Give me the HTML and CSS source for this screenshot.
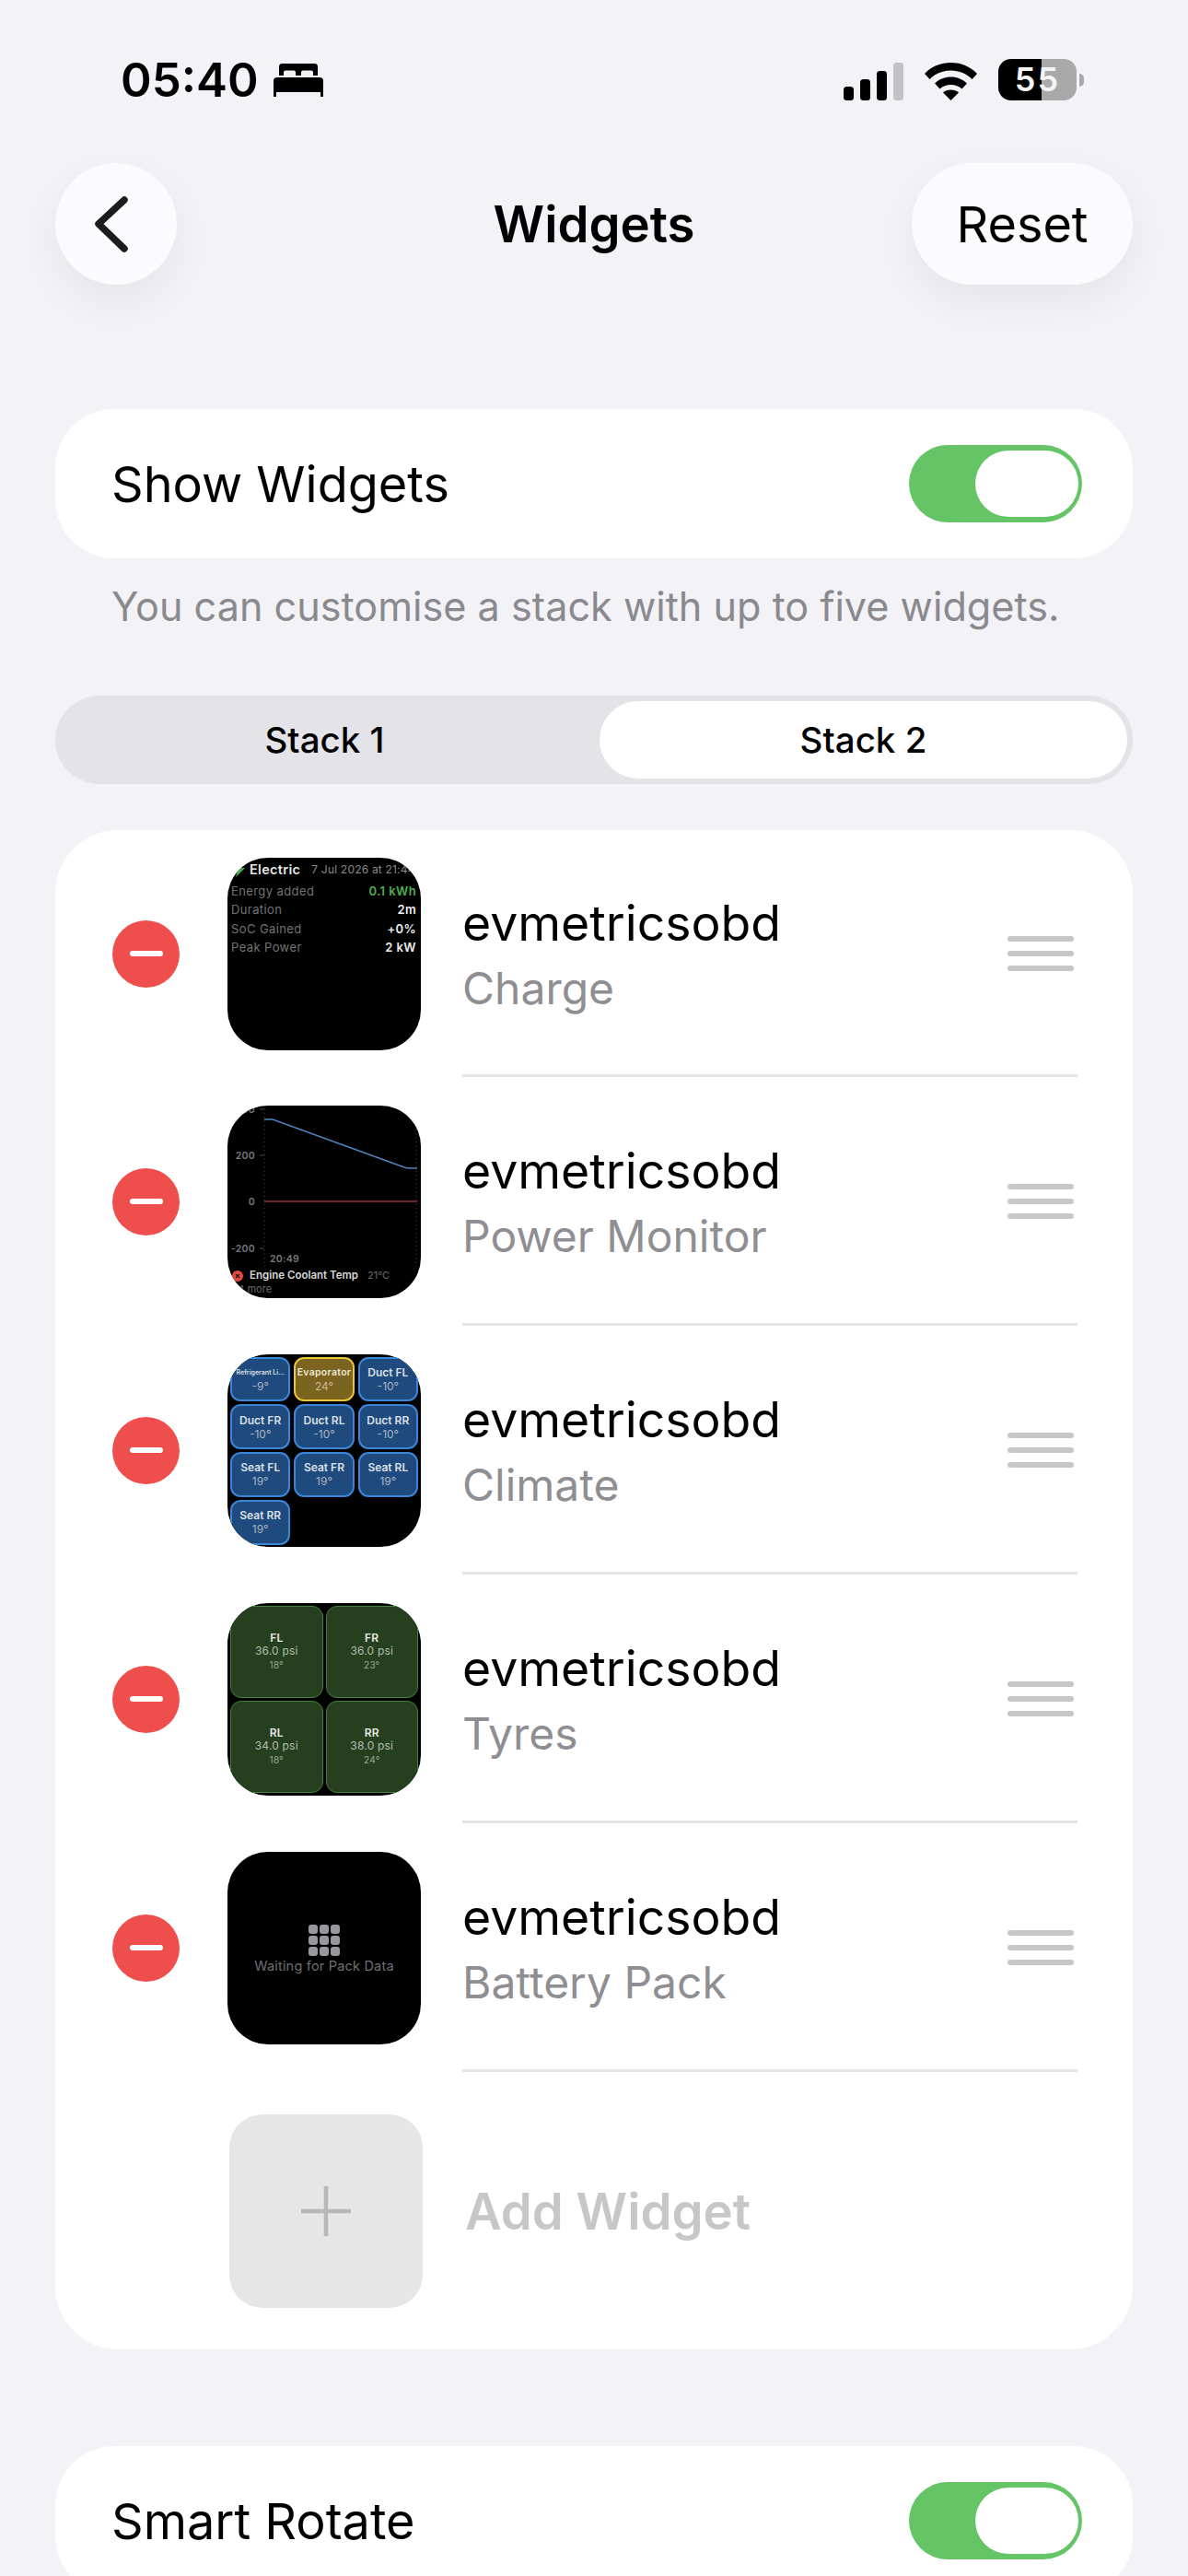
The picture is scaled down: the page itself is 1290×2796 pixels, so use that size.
FILE: index.html
```html
<!DOCTYPE html>
<html lang="en">
<head>
<meta charset="UTF-8">
<meta name="viewport" content="width=device-width, initial-scale=1.0">
<title>Widgets</title>
<link rel="stylesheet" href="styles.css">
</head>
<body>

<div class="status-bar">
    <div class="status-left">
        <span class="status-time">05:40</span>
        <svg class="bed-icon" width="54" height="36" viewBox="0 0 54 36">
            <path d="M6 3.5A3.5 3.5 0 0 1 9.500 0h35A3.500 3.500 0 0 1 48 3.500V13h-5V9.500a2 2 0 0 0-2-2h-9a2 2 0 0 0-2 2V13h-6V9.500a2 2 0 0 0-2-2h-9a2 2 0 0 0-2 2V13H6z" fill="#000"/>
            <path d="M4 15h46a4 4 0 0 1 4 4v17h-3v-5H3v5H0V19a4 4 0 0 1 4-4z" fill="#000"/>
        </svg>
    </div>
    <div class="status-right">
        <svg class="signal-icon" width="65" height="41" viewBox="0 0 65 41">
            <rect x="0" y="26" width="11" height="15" rx="3.500" fill="#000"/>
            <rect x="18" y="18" width="11" height="23" rx="3.500" fill="#000"/>
            <rect x="36" y="9" width="11" height="32" rx="3.500" fill="#000"/>
            <rect x="54" y="0" width="11" height="41" rx="3.500" fill="#c1c1c6"/>
        </svg>
        <svg class="wifi-icon" width="57" height="41" viewBox="0 0 57 41">
            <path d="M28.500 0C40 0 50 4.500 57 12l-5.500 6C45.500 12 37.500 8.500 28.500 8.500S11.500 12 5.500 18L0 12C7 4.500 17 0 28.500 0z" fill="#000"/>
            <path d="M28.500 15.500c7 0 13 2.700 17.500 7L40.500 28.500c-3-2.800-7.300-4.500-12-4.500s-9 1.700-12 4.500L11 22.500c4.500-4.300 10.500-7 17.500-7z" fill="#000"/>
            <path d="M28.500 29.500c3.500 0 6.500 1.200 8.500 3L28.500 41 20 32.500c2-1.800 5-3 8.500-3z" fill="#000"/>
        </svg>
        <div class="battery">
            <span class="battery-level">55</span>
        </div>
        <span class="battery-nub"></span>
    </div>
</div>

<div class="page">
    <div class="nav-bar">
        <button class="back-button">
            <svg width="132" height="132" viewBox="0 0 132 132">
                <path d="M75 40 47 66l28 27" fill="none" stroke="#1c1c1e" stroke-width="7.500" stroke-linecap="round" stroke-linejoin="round"/>
            </svg>
        </button>
        <h1 class="nav-title">Widgets</h1>
        <button class="reset-button">Reset</button>
    </div>

    <div class="toggle-card">
        <span class="toggle-label">Show Widgets</span>
        <span class="toggle"><span class="toggle-knob"></span></span>
    </div>
    <p class="hint">You can customise a stack with up to five widgets.</p>

    <div class="segments">
        <div class="segment segment-idle">Stack 1</div>
        <div class="segment segment-active"><span>Stack 2</span></div>
    </div>

    <div class="widget-list">
        <div class="widget-row">
            <span class="remove-button"><span class="remove-bar"></span></span>
            <div class="thumb">
                <div class="charge-head">
                    <svg class="charge-bolt" width="13" height="16" viewBox="0 0 13 16"><path d="M9 0 0 9h5l-2 7 10-10H7.500z" fill="#4caf50"/></svg>
                    <span class="charge-title">Electric</span>
                    <span class="charge-date">7 Jul 2026 at 21:44</span>
                </div>
                <div class="charge-line"><span>Energy added</span><b class="charge-green">0.1 kWh</b></div>
                <div class="charge-line"><span>Duration</span><b>2m</b></div>
                <div class="charge-line"><span>SoC Gained</span><b>+0%</b></div>
                <div class="charge-line"><span>Peak Power</span><b>2 kW</b></div>
            </div>
            <div class="row-body">
                <div class="row-text">
                    <div class="row-name">evmetricsobd</div>
                    <div class="row-sub">Charge</div>
                </div>
                <div class="handle"><span></span><span></span><span></span></div>
            </div>
        </div>

        <div class="widget-row">
            <span class="remove-button"><span class="remove-bar"></span></span>
            <div class="thumb">
                <svg class="chart" width="210" height="210" viewBox="0 0 210 210">
                    <path d="M40 3V175M205 3V175" stroke="#3a3a3c" stroke-width="1" stroke-dasharray="1.500 3" fill="none"/>
                    <path d="M35 4h5M35 54h5M35 155h5" stroke="#48484a" stroke-width="1" fill="none"/>
                    <path d="M40 15H49L192 67Q195 68 198 68H206" stroke="#4f86bf" stroke-width="1.500" fill="none"/>
                    <path d="M40 104H206" stroke="#e5493f" stroke-width="1" fill="none"/>
                    <text class="chart-axis" x="30" y="8" text-anchor="end">400</text>
                    <text class="chart-axis" x="30" y="58" text-anchor="end">200</text>
                    <text class="chart-axis" x="30" y="108" text-anchor="end">0</text>
                    <text class="chart-axis" x="30" y="159" text-anchor="end">-200</text>
                    <text class="chart-axis" x="46" y="170">20:49</text>
                    <circle cx="11" cy="185" r="6" fill="#e5493f"/>
                    <path d="M9 183l4 4M13 183l-4 4" stroke="#1c1c1e" stroke-width="1.300" fill="none"/>
                    <text class="chart-legend" x="24" y="188">Engine Coolant Temp</text>
                    <text class="chart-value" x="152" y="188">21°C</text>
                    <text class="chart-value" x="4" y="203">+4 more</text>
                </svg>
            </div>
            <div class="row-body">
                <div class="row-text">
                    <div class="row-name">evmetricsobd</div>
                    <div class="row-sub">Power Monitor</div>
                </div>
                <div class="handle"><span></span><span></span><span></span></div>
            </div>
        </div>

        <div class="widget-row">
            <span class="remove-button"><span class="remove-bar"></span></span>
            <div class="thumb climate-grid">
                <div class="climate-cell"><b class="climate-small">Refrigerant Li...</b><span>-9°</span></div>
                <div class="climate-cell climate-warm"><b>Evaporator</b><span>24°</span></div>
                <div class="climate-cell"><b>Duct FL</b><span>-10°</span></div>
                <div class="climate-cell"><b>Duct FR</b><span>-10°</span></div>
                <div class="climate-cell"><b>Duct RL</b><span>-10°</span></div>
                <div class="climate-cell"><b>Duct RR</b><span>-10°</span></div>
                <div class="climate-cell"><b>Seat FL</b><span>19°</span></div>
                <div class="climate-cell"><b>Seat FR</b><span>19°</span></div>
                <div class="climate-cell"><b>Seat RL</b><span>19°</span></div>
                <div class="climate-cell"><b>Seat RR</b><span>19°</span></div>
            </div>
            <div class="row-body">
                <div class="row-text">
                    <div class="row-name">evmetricsobd</div>
                    <div class="row-sub">Climate</div>
                </div>
                <div class="handle"><span></span><span></span><span></span></div>
            </div>
        </div>

        <div class="widget-row">
            <span class="remove-button"><span class="remove-bar"></span></span>
            <div class="thumb tyre-grid">
                <div class="tyre-cell"><b>FL</b><span>36.0 psi</span><small>18°</small></div>
                <div class="tyre-cell"><b>FR</b><span>36.0 psi</span><small>23°</small></div>
                <div class="tyre-cell"><b>RL</b><span>34.0 psi</span><small>18°</small></div>
                <div class="tyre-cell"><b>RR</b><span>38.0 psi</span><small>24°</small></div>
            </div>
            <div class="row-body">
                <div class="row-text">
                    <div class="row-name">evmetricsobd</div>
                    <div class="row-sub">Tyres</div>
                </div>
                <div class="handle"><span></span><span></span><span></span></div>
            </div>
        </div>

        <div class="widget-row">
            <span class="remove-button"><span class="remove-bar"></span></span>
            <div class="thumb pack-thumb">
                <div class="pack-icon">
                    <span></span><span></span><span></span>
                    <span></span><span></span><span></span>
                    <span></span><span></span><span></span>
                </div>
                <div class="pack-text">Waiting for Pack Data</div>
            </div>
            <div class="row-body">
                <div class="row-text">
                    <div class="row-name">evmetricsobd</div>
                    <div class="row-sub">Battery Pack</div>
                </div>
                <div class="handle"><span></span><span></span><span></span></div>
            </div>
        </div>

        <div class="add-row">
            <div class="add-tile">
                <svg width="54" height="54" viewBox="0 0 54 54">
                    <path d="M27 1V53M1 27H53" stroke="#b7b7b7" stroke-width="4.500" stroke-linecap="round" fill="none"/>
                </svg>
            </div>
            <span class="add-label">Add Widget</span>
        </div>
    </div>

    <div class="toggle-card rotate-card">
        <span class="toggle-label">Smart Rotate</span>
        <span class="toggle"><span class="toggle-knob"></span></span>
    </div>
</div>

</body>
</html>
```

FILE: styles.css
```css
html, body {
    height: 2796px;
    overflow: hidden;
}
body {
    margin: 0;
    padding: 0;
    background-color: #f2f2f7;
    color: #000;
    font-family: Inter, "Liberation Sans", sans-serif;
}

/* status bar */
.status-bar {
    height: 177px;
    box-sizing: border-box;
    padding: 64px 113px 0 131px;
    display: flex;
    justify-content: space-between;
    align-items: flex-start;
}
.status-left {
    display: flex;
    align-items: center;
    height: 46px;
}
.status-time {
    font-size: 51px;
    font-weight: 600;
    line-height: 46px;
}
.bed-icon {
    margin-left: 16px;
}
.status-right {
    display: flex;
    align-items: center;
    height: 45px;
}
.signal-icon {
    margin-top: 4px;
}
.wifi-icon {
    margin-left: 23px;
    margin-top: 4px;
}
.battery {
    margin-left: 23px;
    width: 85px;
    height: 45px;
    border-radius: 14px;
    background: linear-gradient(to right, #000 47px, #a9a9a9 47px);
    text-align: center;
}
.battery-level {
    color: #f4f4f4;
    font-size: 36px;
    font-weight: 600;
    line-height: 45px;
    letter-spacing: 2px;
    display: block;
}
.battery-nub {
    margin-left: 3px;
    width: 5px;
    height: 14px;
    border-radius: 0 7px 7px 0;
    background-color: #a9a9a9;
}

.page {
    padding: 0 60px;
}

/* nav */
.nav-bar {
    display: grid;
    grid-template-columns: 1fr auto 1fr;
    align-items: center;
    height: 132px;
}
.back-button {
    justify-self: start;
    width: 132px;
    height: 132px;
    padding: 0;
    border: none;
    border-radius: 50%;
    background-color: #fbfbfe;
    box-shadow: 0 18px 48px rgba(0, 0, 0, 0.06);
}
.back-button svg {
    display: block;
}
.nav-title {
    margin: 0;
    font-size: 54.500px;
    font-weight: 600;
}
.reset-button {
    justify-self: end;
    width: 240px;
    height: 132px;
    padding: 0;
    border: none;
    border-radius: 66px;
    background-color: #fbfbfe;
    box-shadow: 0 18px 48px rgba(0, 0, 0, 0.06);
    color: #000;
    font-family: inherit;
    font-size: 54px;
}

/* toggle cards */
.toggle-card {
    margin-top: 135px;
    height: 162px;
    box-sizing: border-box;
    padding: 0 55px 0 61px;
    display: flex;
    justify-content: space-between;
    align-items: center;
    background-color: #fff;
    border-radius: 64px;
}
.toggle-label {
    font-size: 54px;
}
.toggle {
    width: 188px;
    height: 84px;
    box-sizing: border-box;
    padding: 0 4px;
    display: flex;
    justify-content: flex-end;
    align-items: center;
    background-color: #65c466;
    border-radius: 42px;
}
.toggle-knob {
    width: 112px;
    height: 72px;
    background-color: #fff;
    border-radius: 36px;
}
.rotate-card {
    margin-top: 105px;
}

.hint {
    margin: 25px 0 0 0;
    padding-left: 61px;
    font-size: 43.200px;
    line-height: 54px;
    color: #8a8a8e;
}

/* segments */
.segments {
    margin-top: 70px;
    height: 96px;
    display: flex;
    background-color: #e3e3e8;
    border-radius: 48px;
}
.segment {
    width: 591px;
    text-align: center;
    font-size: 38.500px;
    font-weight: 500;
    line-height: 96px;
}
.segment-idle {
    box-sizing: border-box;
    padding-right: 6px;
}
.segment-active {
    flex: 1;
    padding: 6px 6px 6px 0;
}
.segment-active span {
    display: block;
    height: 84px;
    line-height: 84px;
    background-color: #fff;
    border-radius: 42px;
}

/* widget list */
.widget-list {
    margin-top: 50px;
    background-color: #fff;
    border-radius: 68px;
}
.widget-row {
    height: 270px;
    padding-left: 62px;
    display: flex;
    align-items: center;
}
.widget-row:first-child {
    height: 268px;
}
.remove-button {
    width: 73px;
    height: 73px;
    flex: none;
    display: flex;
    justify-content: center;
    align-items: center;
    background-color: #ee4f4d;
    border-radius: 50%;
}
.remove-bar {
    width: 36px;
    height: 6px;
    background-color: #fff;
    border-radius: 3px;
}
.thumb {
    margin-left: 52px;
    width: 210px;
    height: 209px;
    flex: none;
    box-sizing: border-box;
    overflow: hidden;
    background-color: #000;
    border-radius: 44px;
}
.row-body {
    margin: 0 60px 0 45px;
    flex: 1;
    align-self: stretch;
    display: flex;
    justify-content: space-between;
    align-items: center;
    border-bottom: 3px solid #e5e5e6;
}
.row-text {
    padding-top: 7px;
}
.row-name {
    font-size: 53.500px;
    line-height: 71px;
}
.row-sub {
    font-size: 48px;
    line-height: 71px;
    color: #8e8e93;
}
.handle {
    margin: 3px 4px 0 0;
    width: 72px;
    display: flex;
    flex-direction: column;
    gap: 10px;
}
.handle span {
    height: 6px;
    background-color: #c7c7c7;
    border-radius: 3px;
}

/* charge thumb */
.charge-head {
    height: 26px;
    padding-left: 6px;
    display: flex;
    align-items: center;
    white-space: nowrap;
}
.charge-bolt {
    flex: none;
}
.charge-title {
    margin-left: 5px;
    color: #e8e8e8;
    font-size: 14.500px;
    font-weight: 600;
    letter-spacing: 0.3px;
}
.charge-date {
    margin-left: 12px;
    color: #8a8a8a;
    font-size: 12px;
    letter-spacing: 0.2px;
}
.charge-line {
    height: 20.500px;
    margin: 0 5px 0 4px;
    display: flex;
    justify-content: space-between;
    align-items: center;
    color: #737373;
    font-size: 13px;
    letter-spacing: 0.4px;
}
.charge-line b {
    color: #eee;
    font-weight: 600;
}
.charge-line .charge-green {
    color: #4caf50;
}

/* chart thumb */
.chart {
    display: block;
}
.chart-axis {
    fill: #77777a;
    font-size: 10.500px;
    font-weight: 600;
    letter-spacing: 0.3px;
}
.chart-legend {
    fill: #d8d8d8;
    font-size: 11.500px;
    font-weight: 600;
}
.chart-value {
    fill: #6a6a6d;
    font-size: 11px;
}

/* climate thumb */
.climate-grid {
    padding: 3px 3px 2px 3px;
    display: grid;
    grid-template-columns: repeat(3, 1fr);
    grid-template-rows: repeat(4, 1fr);
    gap: 3px 4px;
}
.climate-cell {
    display: flex;
    flex-direction: column;
    justify-content: center;
    align-items: center;
    box-sizing: border-box;
    background-color: #1f4a7d;
    border: 2px solid #3a86d8;
    border-radius: 11px;
    color: #a9b4c4;
    font-size: 12px;
    line-height: 15px;
    white-space: nowrap;
}
.climate-cell b {
    color: #dbe0e8;
    font-weight: 600;
    font-size: 12px;
}
.climate-cell .climate-small {
    font-size: 7px;
}
.climate-warm {
    background-color: #7a6420;
    border-color: #e8c53a;
    color: #c9bd92;
}
.climate-cell.climate-warm b {
    color: #ece6cf;
    font-size: 10.500px;
    letter-spacing: 0.3px;
}

/* tyres thumb */
.tyre-grid {
    padding: 3px;
    display: grid;
    grid-template-columns: 1fr 1fr;
    grid-template-rows: 1fr 1fr;
    gap: 3px;
}
.tyre-cell {
    display: flex;
    flex-direction: column;
    justify-content: center;
    align-items: center;
    box-sizing: border-box;
    background-color: #26401f;
    border: 1px solid #43803d;
    border-radius: 12px;
    color: #b4bdb0;
    font-size: 12px;
    line-height: 14.500px;
    letter-spacing: 0.2px;
}
.tyre-cell b {
    color: #e8ebe6;
    font-weight: 600;
}
.tyre-cell small {
    color: #9ba697;
    font-size: 10px;
}

/* pack thumb */
.pack-thumb {
    display: flex;
    flex-direction: column;
    align-items: center;
    padding-top: 79px;
}
.pack-icon {
    width: 34px;
    display: grid;
    grid-template-columns: repeat(3, 10px);
    gap: 2px;
}
.pack-icon span {
    height: 10px;
    background-color: #98989d;
    border-radius: 3px;
}
.pack-text {
    margin-top: 2px;
    color: #6f6f73;
    font-size: 14.500px;
    letter-spacing: 0.2px;
    white-space: nowrap;
}

/* add row */
.add-row {
    height: 301px;
    padding-left: 189px;
    display: flex;
    align-items: center;
}
.add-tile {
    width: 210px;
    height: 210px;
    display: flex;
    justify-content: center;
    align-items: center;
    background-color: #e6e6e6;
    border-radius: 36px;
}
.add-label {
    margin-left: 46px;
    color: #c7c7c7;
    font-size: 54.500px;
    font-weight: 600;
}
```
